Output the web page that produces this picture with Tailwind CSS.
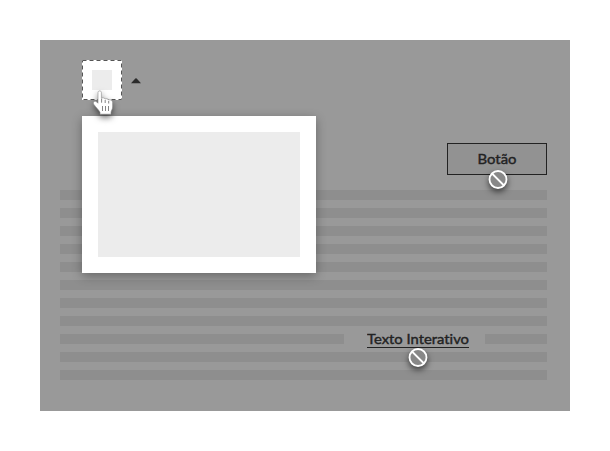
<!DOCTYPE html>
<html lang="pt">
<head>
<meta charset="utf-8">
<title>Popover</title>
<script src="https://cdn.jsdelivr.net/npm/@tailwindcss/browser@4"></script>
</head>
<body class="w-[610px] h-[451px] overflow-hidden bg-white p-10 font-['Lato','Open_Sans',sans-serif] text-[#222]">
<main class="w-[530px] h-[371px] bg-[#999] pl-5 pr-[23px] pt-5">
  <header class="flex h-[130px] justify-between pl-[22px]">
    <div class="relative flex h-10 items-center gap-[9px]">
      <button class="relative flex size-10 items-center justify-center bg-white" aria-label="Abrir">
        <svg class="absolute inset-0" width="40" height="40" fill="none" stroke="#555" stroke-dasharray="4 3"><rect x=".5" y=".5" width="39" height="39"/></svg>
        <span class="size-5 bg-[#ececec]"></span>
      </button>
      <svg class="mt-0.5" width="10" height="6" viewBox="0 0 10 6" fill="#2b2b2b"><path d="M0 5.2 4.3.6Q5 0 5.7.6L10 5.2Z"/></svg>
      <!-- popover -->
      <div class="absolute left-0 top-14 z-10 h-[157px] w-[234px] bg-white p-4 shadow-[0_3px_10px_rgba(0,0,0,.32)]">
        <div class="h-[125px] w-[202px] bg-[#ececec]"></div>
      </div>
      <!-- hand cursor -->
      <svg class="absolute left-[9px] top-[30px] z-20 overflow-visible drop-shadow-[0_3px_3px_rgba(0,0,0,.55)]" width="24" height="26" viewBox="0 0 24 26">
        <path d="M7 2.5C7 .4 10.4 .4 10.4 2.5V8.5C11.2 7.4 13.7 7.7 14 9.1 14.9 8.2 17.2 8.7 17.5 10 19.2 9.3 21.6 10.2 21.6 12.2V17C21.6 19.4 20 20.6 20 22.4V24.2H9V22.2C7.5 19.5 5 17.5 2.7 14.2 1.4 11.8 4.2 10.3 6 12.2L7 13.2Z" fill="#fff" stroke="#888" stroke-width=".6"/>
        <path d="M10.6 9v3.7M14.2 10v3M17.7 11v2.5M11.5 16v5M14.5 16v5M17.5 16v5" stroke="#777" stroke-width=".9"/>
      </svg>
    </div>
    <div class="relative mt-[83px] h-8 w-[100px]">
      <button class="h-8 w-full border border-[#222] bg-[#929292] text-[14px]">
        <svg class="mx-auto block" width="40" height="30"><text x="0.5" y="19.5" textLength="39" lengthAdjust="spacingAndGlyphs" fill="#222" stroke="#222" stroke-width=".4">Botão</text></svg>
      </button>
      <svg class="absolute left-[41px] top-[27px] overflow-visible drop-shadow-[0_3px_3px_rgba(0,0,0,.6)]" width="20" height="20" fill="none" stroke="#fff" stroke-width="1.8"><circle cx="10" cy="9.5" r="8.5" fill="#888"/><path d="m4 3.5 12 12"/></svg>
    </div>
  </header>
  <section class="flex flex-col gap-2">
    <div class="h-2.5 bg-[#8e8e8e]"></div>
    <div class="h-2.5 bg-[#8e8e8e]"></div>
    <div class="h-2.5 bg-[#8e8e8e]"></div>
    <div class="h-2.5 bg-[#8e8e8e]"></div>
    <div class="h-2.5 bg-[#8e8e8e]"></div>
    <div class="h-2.5 bg-[#8e8e8e]"></div>
    <div class="h-2.5 bg-[#8e8e8e]"></div>
    <div class="h-2.5 bg-[#8e8e8e]"></div>
    <div class="flex h-2.5 items-center justify-between">
      <div class="h-full w-[284px] bg-[#8e8e8e]"></div>
      <div class="relative z-10 mr-4 ml-[23px] h-[18px] w-[102px] border-b border-[#222] text-[14px] leading-[18px] whitespace-nowrap [font-variant-ligatures:none]">
        <svg class="block" width="102" height="17"><text x="0" y="13.5" textLength="102" lengthAdjust="spacingAndGlyphs" fill="#222" stroke="#222" stroke-width=".4">Texto Interativo</text></svg>
        <svg class="absolute left-[41px] top-[18px] overflow-visible drop-shadow-[0_3px_3px_rgba(0,0,0,.6)]" width="20" height="20" fill="none" stroke="#fff" stroke-width="1.8"><circle cx="10" cy="9.5" r="8.5" fill="#888"/><path d="m4 3.5 12 12"/></svg>
      </div>
      <div class="h-full w-[62px] bg-[#8e8e8e]"></div>
    </div>
    <div class="h-2.5 bg-[#8e8e8e]"></div>
    <div class="h-2.5 bg-[#8e8e8e]"></div>
  </section>
</main>
</body>
</html>
